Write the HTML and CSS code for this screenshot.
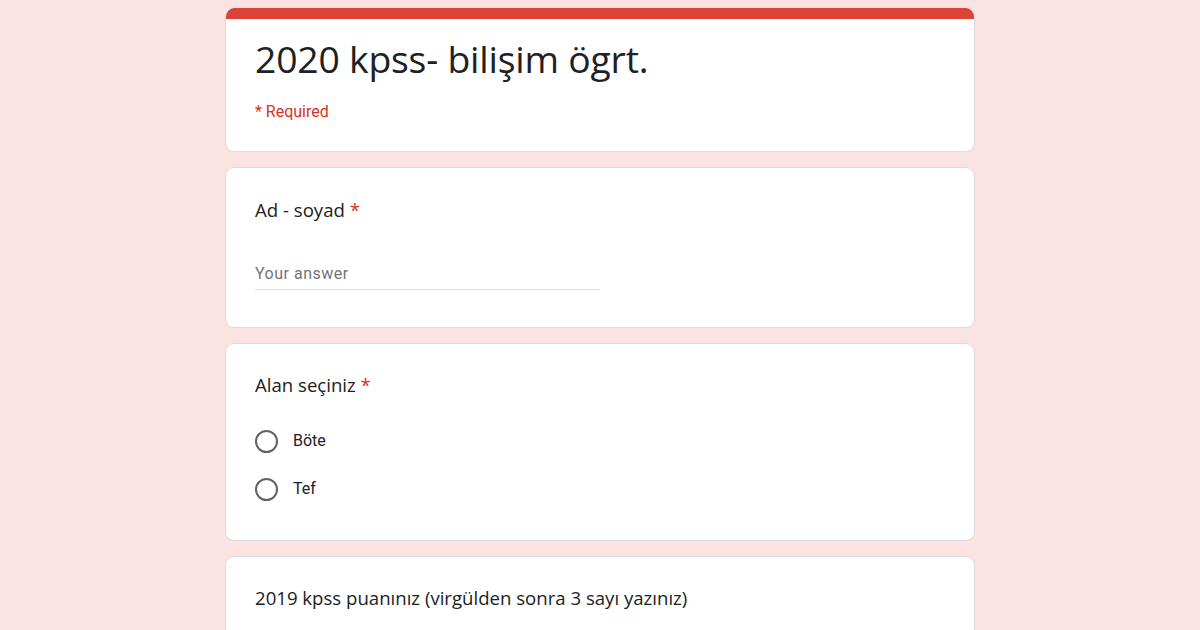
FILE: index.html
```html
<!DOCTYPE html>
<html lang="tr">
<head>
<meta charset="utf-8">
<title>2020 kpss- bilişim ögrt.</title>
<link rel="stylesheet" href="styles.css">
</head>
<body>
<div class="form">
  <div class="card header-card">
    <div class="accent"></div>
    <div class="header-body">
      <h1 class="form-title">2020 kpss- bilişim ögrt.</h1>
      <div class="required-note">* Required</div>
    </div>
  </div>

  <div class="card question">
    <div class="q-title">Ad - soyad <span class="star">*</span></div>
    <div class="text-input">Your answer</div>
  </div>

  <div class="card question q-radio">
    <div class="q-title">Alan seçiniz <span class="star">*</span></div>
    <div class="options">
      <div class="option"><span class="radio"></span><span class="opt-label">Böte</span></div>
      <div class="option"><span class="radio"></span><span class="opt-label">Tef</span></div>
    </div>
  </div>

  <div class="card question q-last">
    <div class="q-title">2019 kpss puanınız (virgülden sonra 3 sayı yazınız)</div>
  </div>
</div>
</body>
</html>
```

FILE: styles.css
```css
html, body {
  margin: 0;
  padding: 0;
}
body {
  background: #fae3e1;
  font-family: Roboto, "Liberation Sans", sans-serif;
  color: #202124;
  overflow: hidden;
  height: 630px;
}
.form {
  width: 750px;
  margin: 0 auto;
  padding-top: 8px;
  display: flex;
  flex-direction: column;
  gap: 15px;
}
.card {
  background: #fff;
  border: 1px solid #dadce0;
  border-radius: 9px;
  overflow: hidden;
}
.header-card {
  border-top: none;
}
.accent {
  height: 11px;
  background: #db4437;
}
.header-body {
  padding: 18px 29px 29px;
}
.form-title {
  margin: 0;
  font-family: "Open Sans", sans-serif;
  font-weight: 400;
  font-size: 37.3px;
  line-height: 44px;
  letter-spacing: -0.2px;
  color: #202124;
}
.required-note {
  margin-top: 21px;
  font-size: 16px;
  line-height: 20px;
  color: #d93025;
}
.question {
  padding: 30px 29px 37px;
}
.q-title {
  font-family: "Open Sans", sans-serif;
  font-size: 18.6px;
  line-height: 24px;
  color: #202124;
}
.star {
  color: #d93025;
}
.text-input {
  margin-top: 42px;
  width: 345px;
  font-size: 16px;
  line-height: 20px;
  letter-spacing: 0.5px;
  color: #70757a;
  padding-bottom: 5px;
  border-bottom: 1px solid #e0e0e0;
}
.q-radio {
  padding-top: 29px;
  padding-bottom: 39px;
}
.q-last {
  padding-top: 29px;
  padding-bottom: 60px;
}
.options {
  margin-top: 32px;
  display: flex;
  flex-direction: column;
  gap: 24px;
}
.option {
  display: flex;
  align-items: center;
  height: 24px;
}
.radio {
  box-sizing: border-box;
  width: 23px;
  height: 23px;
  border: 2px solid #5f6368;
  border-radius: 50%;
  flex: none;
}
.opt-label {
  margin-left: 15px;
  font-size: 16px;
  line-height: 20px;
  color: #202124;
}
```
